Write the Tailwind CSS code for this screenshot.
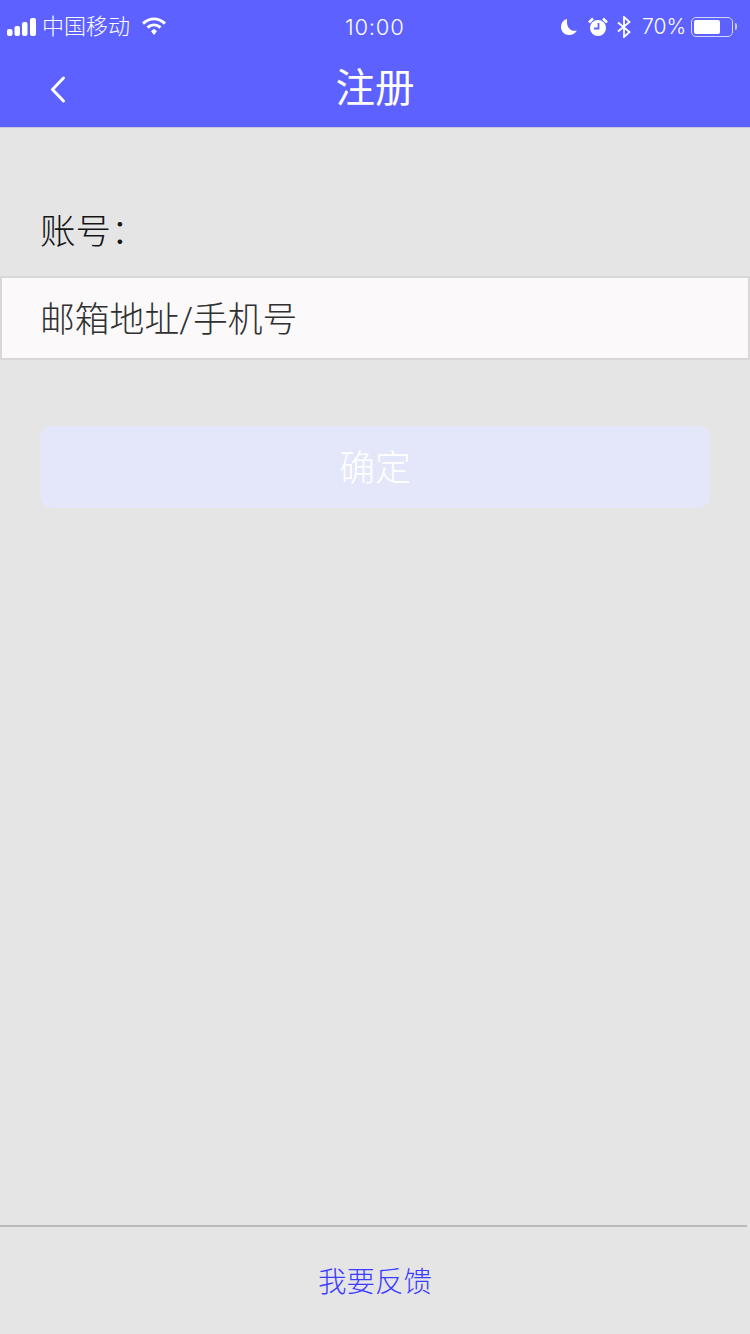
<!DOCTYPE html>
<html lang="zh-CN">
<head>
<meta charset="utf-8">
<script src="https://cdn.jsdelivr.net/npm/@tailwindcss/browser@4"></script>
</head>
<body class="m-0">
<div class="w-[750px] h-[1334px] bg-[#e5e5e5] flex flex-col font-['Roboto','Noto_Sans_CJK_SC',sans-serif] overflow-hidden">
  <header class="h-[128px] bg-[#5c61ff] border-b border-[#c9c9d6] text-white flex flex-col shrink-0">
    <div class="h-[50px] pt-[3px] relative flex items-center justify-between pl-[7px] pr-[17px]">
      <div class="flex items-center">
        <svg width="29" height="18" viewBox="0 0 29 18" fill="white"><rect x="0" y="11" width="5.500" height="7" rx="2"/><rect x="7.500" y="8" width="5.500" height="10" rx="2"/><rect x="15" y="4" width="5.500" height="14" rx="2"/><rect x="23" y="0" width="6" height="18" rx="2"/></svg>
        <span class="ml-[6px] text-[22px] leading-[28px] font-light">中国移动</span>
        <svg class="ml-[11px]" width="26" height="19" viewBox="0 0 26 19" fill="none" stroke="white" stroke-width="3"><path d="M2 6.500C9 .5 17 .5 24 6.500"/><path d="M6.500 10.500C10.500 7 15.500 7 19.500 10.500"/><path d="M10 14.200 13 11.800 16 14.200 13 18Z" fill="white" stroke="none"/></svg>
      </div>
      <span class="absolute left-[345px] top-[12px] text-[22px] leading-[30px] tracking-[0.8px] font-['Inter',sans-serif] font-light">10:00</span>
      <div class="flex items-center">
        <svg width="18" height="18" viewBox="0 0 18 18" fill="white"><path d="M7 1C3 2 1 5 1 9c0 4.500 3.500 8 8 8 3.500 0 6-1.500 8-4.500-5 1.500-11-1.500-10-11.500Z"/></svg>
        <svg class="ml-[10px]" width="20" height="20" viewBox="0 0 20 20" fill="white"><circle cx="10" cy="11" r="8"/><path d="M1 5.500 5 1.500M19 5.500 15 1.500" stroke="white" stroke-width="2.500"/><path d="M10.500 6v5.500H6" fill="none" stroke="#5c61ff" stroke-width="1.800"/></svg>
        <svg class="ml-[9px]" width="14" height="22" viewBox="0 0 14 22" fill="none" stroke="white" stroke-width="1.800"><path d="M1 6.500 12.500 16 7 21V1l5.500 5L1 15.500"/></svg>
        <span class="ml-[11px] w-[43px] text-[21px] leading-[30px] font-['Inter',sans-serif] font-light whitespace-nowrap">70%</span>
        <div class="ml-[6px] w-[42px] h-[20px] flex items-center relative">
          <div class="w-[42px] h-[20px] rounded-[5px] border border-[#d5d6ff] p-[2px]"><div class="w-[26px] h-[14px] bg-white rounded-[2px]"></div></div>
          <div class="absolute right-[-4px] top-[6px] w-[2px] h-[7px] bg-[#c5c7ff] rounded-r-[2px]"></div>
        </div>
      </div>
    </div>
    <div class="flex-1 relative flex items-center justify-center">
      <svg class="absolute left-[50px] top-[26px]" width="16" height="27" viewBox="0 0 16 27" fill="none" stroke="white" stroke-width="3" stroke-linecap="round" stroke-linejoin="round"><path d="M13.500 2 2.500 13.500 13.500 25"/></svg>
      <h1 class="text-[39.500px] leading-[50px] font-normal">注册</h1>
    </div>
  </header>
  <main class="flex-1 flex flex-col">
    <label class="block mt-[81px] h-[46px] pl-[40px] text-[35.500px] leading-[46px] text-[#161616] font-light">账号：</label>
    <div class="mt-[21px] h-[84px] bg-[#fbf9fa] border-2 border-[#d8d8d8] pl-[38px] pt-[5px] flex items-center text-[34.800px] text-[#303030] font-light">邮箱地址/手机号</div>
    <button class="mx-[40px] mt-[66px] h-[82px] pt-[3px] rounded-[12px] bg-[#e3e7f9] text-white text-[36px] flex items-center justify-center font-light">确定</button>
  </main>
  <footer class="h-[109px] shrink-0 flex flex-col">
    <div class="w-[747px] h-[2px] bg-[#bababa]"></div>
    <div class="flex-1 pt-[6px] flex items-center justify-center text-[28.500px] text-[#3c3cff] font-light">我要反馈</div>
  </footer>
</div>
</body>
</html>
